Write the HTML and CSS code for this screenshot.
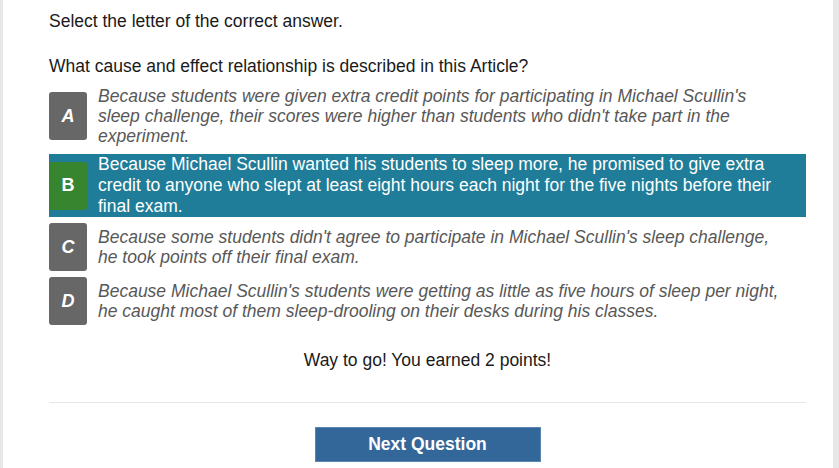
FILE: index.html
```html
<!DOCTYPE html>
<html lang="en">
<head>
<meta charset="utf-8">
<title>Question</title>
<link rel="stylesheet" href="styles.css">
</head>
<body>
<div class="panel">
  <p class="instructions">Select the letter of the correct answer.</p>
  <p class="question">What cause and effect relationship is described in this Article?</p>
  <div class="options">
    <div class="option">
      <span class="letter">A</span>
      <span class="text">Because students were given extra credit points for participating in Michael Scullin's sleep challenge, their scores were higher than students who didn't take part in the experiment.</span>
    </div>
    <div class="option selected">
      <span class="letter correct">B</span>
      <span class="text">Because Michael Scullin wanted his students to sleep more, he promised to give extra credit to anyone who slept at least eight hours each night for the five nights before their final exam.</span>
    </div>
    <div class="option">
      <span class="letter">C</span>
      <span class="text">Because some students didn't agree to participate in Michael Scullin's sleep challenge, he took points off their final exam.</span>
    </div>
    <div class="option">
      <span class="letter">D</span>
      <span class="text">Because Michael Scullin's students were getting as little as five hours of sleep per night, he caught most of them sleep-drooling on their desks during his classes.</span>
    </div>
  </div>
  <p class="feedback">Way to go! You earned 2 points!</p>
  <hr class="divider">
  <div class="actions">
    <button class="next">Next Question</button>
  </div>
</div>
</body>
</html>
```
FILE: styles.css
```css
html, body {
  margin: 0;
  padding: 0;
  height: 100%;
}
body {
  background: #e7e7e7;
  font-family: "Liberation Sans", Arial, sans-serif;
  font-size: 17.5px;
  line-height: 20px;
  color: #1a1a1a;
  overflow: hidden;
}
.panel {
  background: #ffffff;
  margin: 0 6px 0 3px;
  min-height: 100%;
  padding: 11px 27px 0 46px;
  box-sizing: border-box;
}
.instructions {
  margin: 0;
}
.question {
  margin: 25px 0 10px 0;
}
.options {
  display: flex;
  flex-direction: column;
}
.option {
  display: flex;
  align-items: center;
  min-height: 48px;
  margin-top: 6px;
}
.option:first-child {
  margin-top: 0;
}
.option.selected {
  margin-top: 8px;
  background: #207d99;
  line-height: 21px;
}
.letter {
  flex: 0 0 38px;
  height: 48px;
  border-radius: 3px;
  background: #676767;
  color: #ffffff;
  font-weight: bold;
  font-style: italic;
  font-size: 18px;
  display: flex;
  align-items: center;
  justify-content: center;
  margin-right: 11px;
}
.letter.correct {
  background: #37862f;
  font-style: normal;
}
.text {
  flex: 1 1 auto;
  font-style: italic;
  font-size: 17.5px;
  color: #585858;
  padding-right: 22px;
}
.selected .text {
  font-style: normal;
  color: #ffffff;
}
.feedback {
  text-align: center;
  margin: 25px 0 0 0;
  color: #1a1a1a;
}
.divider {
  border: 0;
  border-top: 1px solid #e6e6e6;
  margin: 32px 0 0 0;
  height: 0;
}
.actions {
  display: flex;
  justify-content: center;
  padding-top: 24px;
}
.next {
  width: 226px;
  height: 35px;
  background: #33679a;
  border: 1px solid #5a85b0;
  color: #ffffff;
  font-family: "Liberation Sans", Arial, sans-serif;
  font-weight: bold;
  font-size: 17.5px;
  padding: 0;
}
```
